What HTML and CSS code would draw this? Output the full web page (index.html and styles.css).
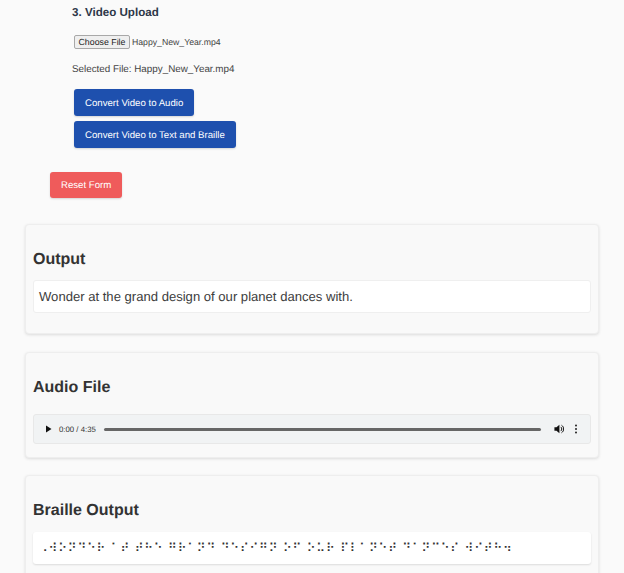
FILE: index.html
```html
<!DOCTYPE html>
<html lang="en">
<head>
<meta charset="utf-8">
<title>Video Upload</title>
<link rel="stylesheet" href="styles.css">
</head>
<body>
<main class="page">
  <section class="upload">
    <h3 class="step-title">3. Video Upload</h3>
    <div class="file-row">
      <button class="file-btn" type="button">Choose File</button>
      <span class="file-name">Happy_New_Year.mp4</span>
    </div>
    <p class="selected">Selected File: Happy_New_Year.mp4</p>
    <div class="actions">
      <button class="btn btn-blue" type="button">Convert Video to Audio</button>
      <button class="btn btn-blue" type="button">Convert Video to Text and Braille</button>
    </div>
  </section>
  <div class="reset-row">
    <button class="btn btn-red" type="button">Reset Form</button>
  </div>
  <section class="card card-output">
    <h2 class="card-title">Output</h2>
    <div class="text-box">Wonder at the grand design of our planet dances with.</div>
  </section>
  <section class="card card-audio">
    <h2 class="card-title">Audio File</h2>
    <div class="player">
      <svg class="play" width="8" height="8" viewBox="0 0 8 8"><path d="M2 0.500 L7.500 4 L2 7.500 Z" fill="#111"/></svg>
      <span class="time">0:00 / 4:35</span>
      <div class="track"></div>
      <svg class="vol" width="10" height="10" viewBox="0 0 12 12"><path d="M0.500 4 H3 L6.500 1 V11 L3 8 H0.500 Z" fill="#111"/><path d="M8 3.500 A3 3 0 0 1 8 8.500 M9 1.500 A5.200 5.200 0 0 1 9 10.500" fill="none" stroke="#111" stroke-width="1.200"/></svg>
      <svg class="more" width="4" height="10" viewBox="0 0 4 10"><circle cx="2" cy="1.500" r="1" fill="#222"/><circle cx="2" cy="5" r="1" fill="#222"/><circle cx="2" cy="8.500" r="1" fill="#222"/></svg>
    </div>
  </section>
  <section class="card card-braille">
    <h2 class="card-title">Braille Output</h2>
    <div class="braille-box">⠠⠺⠕⠝⠙⠑⠗ ⠁⠞ ⠞⠓⠑ ⠛⠗⠁⠝⠙ ⠙⠑⠎⠊⠛⠝ ⠕⠋ ⠕⠥⠗ ⠏⠇⠁⠝⠑⠞ ⠙⠁⠝⠉⠑⠎ ⠺⠊⠞⠓⠲</div>
  </section>
</main>
</body>
</html>
```
FILE: styles.css
```css
* { box-sizing: border-box; }
html, body { margin: 0; height: 573px; overflow: hidden; }
body {
  background: #fafafa;
  font-family: "Liberation Sans", Arial, sans-serif;
  color: #333;
  text-rendering: geometricPrecision;
}
.page { padding: 0 25px; }
.upload { padding: 5px 0 0 47px; }
.step-title {
  margin: 0;
  font-size: 11.600px;
  line-height: 15px;
  font-weight: 700;
  color: #2d3748;
}
.file-row {
  display: flex;
  align-items: center;
  margin: 15px 0 0 2px;
  height: 14px;
}
.file-btn {
  width: 56px;
  height: 14px;
  padding: 0;
  margin-right: 2px;
  font: 8.800px "Liberation Sans", Arial, sans-serif;
  text-rendering: geometricPrecision;
  color: #222;
  background: #efefef;
  border: 1px solid #a8a8a8;
  border-radius: 2px;
}
.file-name { font-size: 8.700px; color: #444; }
.selected {
  margin: 14px 0 0;
  font-size: 9.830px;
  line-height: 14px;
  color: #444;
}
.actions {
  display: flex;
  flex-direction: column;
  align-items: flex-start;
  gap: 5px;
  margin: 12px 0 0 2px;
}
.btn {
  height: 27px;
  padding: 1px 11px 0;
  border: 0;
  border-radius: 3px;
  font: 9.650px "Liberation Sans", Arial, sans-serif;
  text-rendering: geometricPrecision;
  color: #fff;
  box-shadow: 0 1px 2px rgba(0, 0, 0, 0.15);
}
.btn-blue { background: #1e50ae; }
.btn-red { background: #ef5b5b; height: 26px; }
.reset-row { display: flex; margin: 24px 0 0 25px; }
.card {
  background: #f9f9f9;
  border: 1px solid #eeeeee;
  border-radius: 4px;
  box-shadow: 0 1px 3px rgba(0, 0, 0, 0.12);
  padding: 0 7px;
}
.card-output { height: 110px; margin-top: 26px; padding-top: 26px; }
.card-audio { height: 106px; margin-top: 18px; padding-top: 26px; }
.card-braille { height: 120px; margin-top: 17px; padding-top: 26px; }
.card-title {
  margin: 0;
  font-size: 16px;
  line-height: 18px;
  font-weight: 700;
  color: #333;
}
.text-box {
  height: 33px;
  margin-top: 11px;
  padding: 0 5px;
  background: #fff;
  border: 1px solid #efefef;
  border-radius: 3px;
  font-size: 13.080px;
  line-height: 31px;
  color: #3d3d3d;
}
.player {
  display: flex;
  align-items: center;
  height: 30px;
  margin-top: 17px;
  padding: 0 12px 0 10px;
  background: #f1f3f4;
  border: 1px solid #e8e8e8;
  border-radius: 3px;
}
.time { margin-left: 7px; font-size: 7.800px; color: #333; }
.track {
  flex: 1;
  height: 3px;
  margin: 0 13px 0 8px;
  background: #666;
  border-radius: 2px;
}
.more { margin-left: 10px; }
.braille-box {
  height: 32px;
  margin-top: 12px;
  padding: 0 5px 0 6px;
  background: #fff;
  border-radius: 3px;
  box-shadow: 0 1px 2px rgba(0, 0, 0, 0.12);
  font-family: "DejaVu Sans", sans-serif;
  font-size: 12px;
  line-height: 32px;
  letter-spacing: 0.810px;
  color: #333;
  white-space: nowrap;
}
```
